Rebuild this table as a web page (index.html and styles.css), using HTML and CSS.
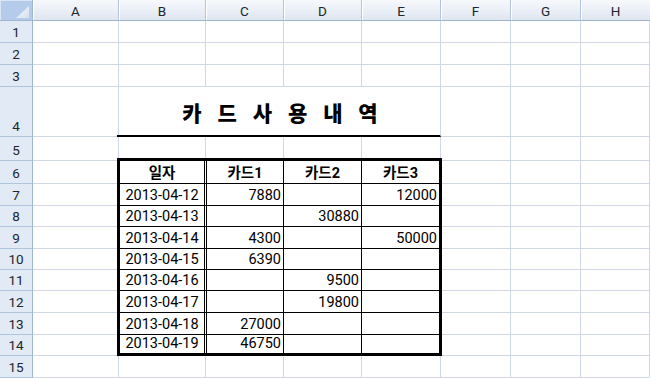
FILE: index.html
```html
<!DOCTYPE html>
<html lang="ko">
<head>
<meta charset="utf-8">
<link rel="stylesheet" href="styles.css">
</head>
<body>
<div class="sheet">
  <div class="corner"><svg width="32" height="20" viewBox="0 0 32 20"><defs><linearGradient id="tg" x1="0" y1="0" x2="1" y2="1"><stop offset="0" stop-color="#f4f7fb"/><stop offset="1" stop-color="#d6e1ef"/></linearGradient></defs><polygon points="16,18 29,18 29,6" fill="url(#tg)"/></svg></div>
  <div class="ch">A</div><div class="ch">B</div><div class="ch">C</div><div class="ch">D</div><div class="ch">E</div><div class="ch">F</div><div class="ch">G</div><div class="ch last">H</div>

  <div class="rh">1</div><div class="c"></div><div class="c"></div><div class="c"></div><div class="c"></div><div class="c"></div><div class="c"></div><div class="c"></div><div class="c"></div>
  <div class="rh">2</div><div class="c"></div><div class="c"></div><div class="c"></div><div class="c"></div><div class="c"></div><div class="c"></div><div class="c"></div><div class="c"></div>
  <div class="rh">3</div><div class="c"></div><div class="c"></div><div class="c"></div><div class="c"></div><div class="c"></div><div class="c"></div><div class="c"></div><div class="c"></div>
  <div class="rh">4</div><div class="c"></div><div class="title">카 드 사 용 내 역</div><div class="c"></div><div class="c"></div><div class="c"></div>
  <div class="rh">5</div><div class="c"></div><div class="c"></div><div class="c"></div><div class="c"></div><div class="c"></div><div class="c"></div><div class="c"></div><div class="c"></div>
  <div class="rh">6</div><div class="c"></div><div class="c"></div><div class="c"></div><div class="c"></div>
  <div class="rh">7</div><div class="c"></div><div class="c"></div><div class="c"></div><div class="c"></div>
  <div class="rh">8</div><div class="c"></div><div class="c"></div><div class="c"></div><div class="c"></div>
  <div class="rh">9</div><div class="c"></div><div class="c"></div><div class="c"></div><div class="c"></div>
  <div class="rh">10</div><div class="c"></div><div class="c"></div><div class="c"></div><div class="c"></div>
  <div class="rh">11</div><div class="c"></div><div class="c"></div><div class="c"></div><div class="c"></div>
  <div class="rh">12</div><div class="c"></div><div class="c"></div><div class="c"></div><div class="c"></div>
  <div class="rh">13</div><div class="c"></div><div class="c"></div><div class="c"></div><div class="c"></div>
  <div class="rh">14</div><div class="c"></div><div class="c"></div><div class="c"></div><div class="c"></div>
  <div class="rh">15</div><div class="c"></div><div class="c"></div><div class="c"></div><div class="c"></div><div class="c"></div><div class="c"></div><div class="c"></div><div class="c"></div>

  <div class="tb">
    <div class="d h">일자</div><div class="h">카드1</div><div class="h">카드2</div><div class="e h">카드3</div>
    <div class="d">2013-04-12</div><div class="n">7880</div><div class="n"></div><div class="e n">12000</div>
    <div class="d">2013-04-13</div><div class="n"></div><div class="n">30880</div><div class="e n"></div>
    <div class="d">2013-04-14</div><div class="n">4300</div><div class="n"></div><div class="e n">50000</div>
    <div class="d">2013-04-15</div><div class="n">6390</div><div class="n"></div><div class="e n"></div>
    <div class="d">2013-04-16</div><div class="n"></div><div class="n">9500</div><div class="e n"></div>
    <div class="d">2013-04-17</div><div class="n"></div><div class="n">19800</div><div class="e n"></div>
    <div class="d">2013-04-18</div><div class="n">27000</div><div class="n"></div><div class="e n"></div>
    <div class="d z">2013-04-19</div><div class="n z">46750</div><div class="n z"></div><div class="e n z"></div>
  </div>
</div>
</body>
</html>
```

FILE: styles.css
```css
html, body {
  margin: 0;
  padding: 0;
}

body {
  width: 650px;
  height: 378px;
  overflow: hidden;
  background: #ffffff;
  font-family: Roboto, "Noto Sans CJK KR", sans-serif;
  color: #000;
}

.sheet {
  display: grid;
  grid-template-columns: 33px 86px 87px 78px 78px 79px 70px 70px 69px;
  grid-template-rows: 21px 22px 22px 22px 50px 24px 23px 22px 21px 22px 21px 21px 22px 22px 21px 22px;
  background: #ffffff;
}

.sheet > div {
  box-sizing: border-box;
  min-width: 0;
  min-height: 0;
}

.c {
  border-right: 1px solid #d0d7e5;
  border-bottom: 1px solid #d0d7e5;
}

.corner {
  background: #b4cbea;
  border-right: 1px solid #9eb6ce;
  border-bottom: 1px solid #9eb6ce;
  box-shadow: inset 1px 1px 0 #dbe6f4;
}

.corner svg {
  display: block;
}

.ch {
  background: linear-gradient(#f6f8fc, #dfe6f1);
  border-right: 1px solid #b3c5db;
  border-bottom: 1px solid #9eb6ce;
  box-shadow: inset 1px 0 0 #ffffff;
  display: flex;
  align-items: flex-end;
  justify-content: center;
  font-size: 13.5px;
  line-height: 13px;
  padding-bottom: 2px;
  color: #20262e;
}

.ch.last {
  border-right: 0;
}

.rh {
  background: #e2eaf6;
  border-right: 1px solid #9eb6ce;
  border-bottom: 1px solid #b0c4dc;
  display: flex;
  align-items: flex-end;
  justify-content: center;
  font-size: 13.5px;
  line-height: 13px;
  padding-bottom: 3px;
  color: #20262e;
}

.title {
  grid-row: 5;
  grid-column: 3 / 7;
  margin-left: -2px;
  border-right: 1px solid #d0d7e5;
  border-bottom: 2px solid #000;
  z-index: 1;
  display: flex;
  align-items: flex-end;
  justify-content: center;
  font-family: "Noto Sans CJK KR", sans-serif;
  font-weight: 900;
  font-size: 21px;
  line-height: 21px;
  word-spacing: 10px;
  padding-bottom: 12px;
  padding-left: 3px;
}

.tb {
  grid-row: 7 / 16;
  grid-column: 3 / 7;
  margin: -3px -1px 0 -2px;
  border: 3px solid #000;
  background: #ffffff;
  z-index: 2;
  display: grid;
  grid-template-columns: 87px 77px 78px 77px;
  grid-template-rows: 23px 22px 21px 22px 21px 21px 22px 22px 18px;
  font-size: 14.5px;
}

.tb > div {
  box-sizing: border-box;
  border-right: 1px solid #000;
  border-bottom: 1px solid #000;
  display: flex;
  align-items: flex-end;
  line-height: 15px;
  padding: 0 2px 2px 2px;
  white-space: nowrap;
}

.tb > .d {
  border-right: 3px double #000;
  justify-content: center;
}

.tb > .e {
  border-right: 0;
}

.tb > .z {
  border-bottom: 0;
}

.tb > .n {
  justify-content: flex-end;
}

.tb > .h {
  justify-content: center;
  font-weight: 700;
}
```
